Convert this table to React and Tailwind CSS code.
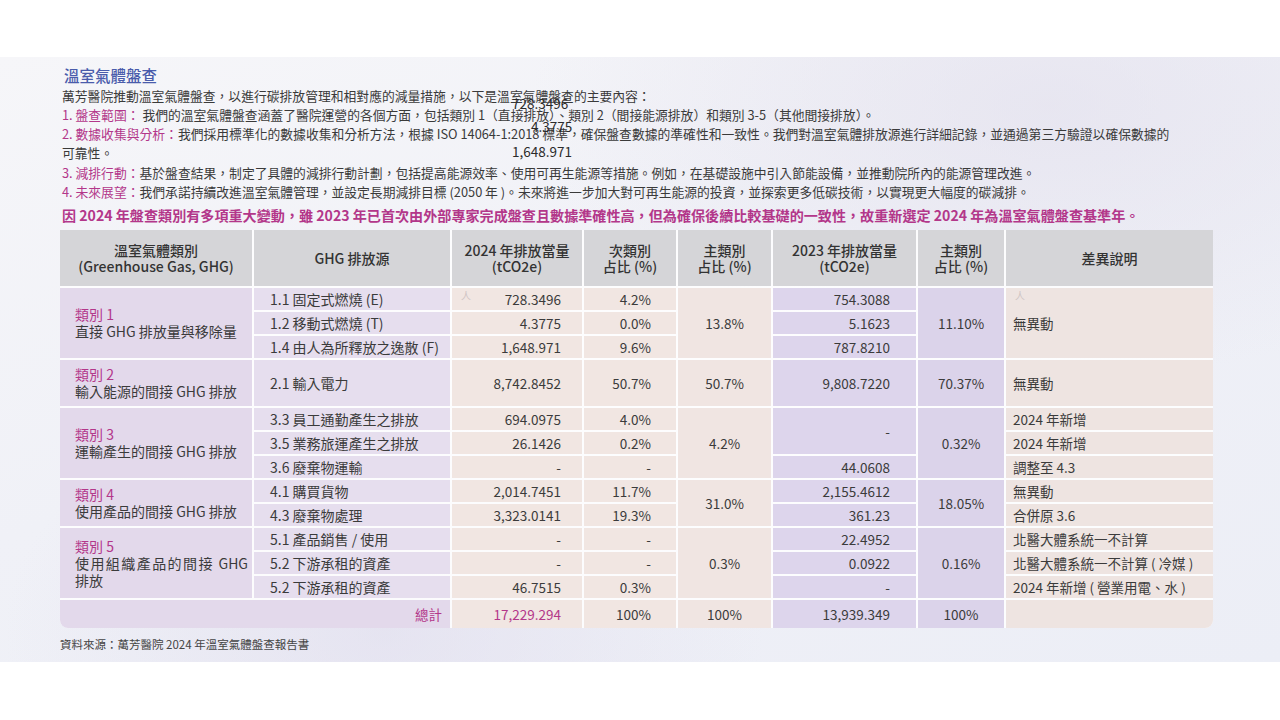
import React from "react";

const PINK = "text-[#b3378a]";

const H = ({ children }) => (
  <div className="bg-[#d5d5d8] flex flex-col items-center justify-center text-center text-[14px] leading-[16px] font-medium text-[#333]">
    {children}
  </div>
);

const cellBase = "flex items-center text-[13.5px] leading-[17px] text-[#3b3b3b] relative";

const L1 = ({ children, span = "" }) => (
  <div className={`${cellBase} !text-[14px] bg-[#e3d9eb] pl-[15px] pr-[4px] ${span}`}>
    <div className="w-full">{children}</div>
  </div>
);
const L2 = ({ children }) => (
  <div className={`${cellBase} !text-[14px] bg-[#e6deee] pl-[16px]`}>{children}</div>
);
const N3 = ({ children, pink = false, extra = null }) => (
  <div className={`${cellBase} bg-[#f1e6e2] justify-end pr-[21px] ${pink ? PINK : ""}`}>
    {extra}
    {children}
  </div>
);
const N4 = ({ children }) => (
  <div className={`${cellBase} bg-[#f1e6e2] justify-end pr-[25px]`}>{children}</div>
);
const C5 = ({ children, span = "" }) => (
  <div className={`${cellBase} bg-[#f0e5e2] justify-center ${span}`}>{children}</div>
);
const N6 = ({ children, span = "" }) => (
  <div className={`${cellBase} bg-[#ddd5ec] justify-end pr-[26px] ${span}`}>{children}</div>
);
const C7 = ({ children, span = "" }) => (
  <div className={`${cellBase} bg-[#dbd3ea] justify-center ${span}`}>{children}</div>
);
const T8 = ({ children, span = "", extra = null }) => (
  <div className={`${cellBase} bg-[#eee4e1] pl-[7px] ${span}`}>
    {extra}
    {children}
  </div>
);

const Cat = ({ n, children }) => (
  <>
    <div className={PINK}>類別 {n}</div>
    <div>{children}</div>
  </>
);

const Ghost = ({ pos }) => (
  <span className={`absolute ${pos} text-[10px] leading-[10px] text-[#cfc4c4]`}>人</span>
);

export default function App() {
  return (
    <div
      className="w-[1280px] h-[720px] bg-white flex flex-col"
      style={{ fontFamily: '"Noto Sans CJK TC", "Noto Sans", sans-serif' }}
    >
      <div className="h-[57px]" />
      <div className="relative h-[605px] bg-[linear-gradient(160deg,#f6f6f9_0%,#f0f1f7_45%,#eceef6_100%)] overflow-hidden">
        <div className="absolute inset-0 bg-[radial-gradient(ellipse_at_82%_8%,rgba(225,222,236,0.6),transparent_35%)]" />
        <div className="absolute inset-0 bg-[radial-gradient(ellipse_at_30%_95%,rgba(222,218,236,0.55),transparent_30%)]" />
        <div className="relative pl-[62px] pt-[7px] text-[12.8px] leading-[19px] text-[#3a3a3a]">
          <div className="text-[15.5px] leading-[22px] font-medium text-[#4a5cab] pl-[2px]">溫室氣體盤查</div>
          <div>萬芳醫院推動溫室氣體盤查，以進行碳排放管理和相對應的減量措施，以下是溫室氣體盤查的主要內容：</div>
          <div>
            <span className={PINK}>1. 盤查範圍：</span> 我們的溫室氣體盤查涵蓋了醫院運營的各個方面，包括類別 1（直接排放）、類別 2（間接能源排放）和類別 3-5（其他間接排放）。
          </div>
          <div>
            <span className={PINK}>2. 數據收集與分析：</span>我們採用標準化的數據收集和分析方法，根據 ISO 14064-1:2018 標準，確保盤查數據的準確性和一致性。我們對溫室氣體排放源進行詳細記錄，並通過第三方驗證以確保數據的
            <br />
            可靠性。
          </div>
          <div className="mt-[1px]">
            <span className={PINK}>3. 減排行動：</span>基於盤查結果，制定了具體的減排行動計劃，包括提高能源效率、使用可再生能源等措施。例如，在基礎設施中引入節能設備，並推動院所內的能源管理改進。
          </div>
          <div>
            <span className={PINK}>4. 未來展望：</span>我們承諾持續改進溫室氣體管理，並設定長期減排目標 (2050 年 )。未來將進一步加大對可再生能源的投資，並探索更多低碳技術，以實現更大幅度的碳減排。
          </div>
          <div className={`mt-[3px] text-[14.1px] leading-[22px] font-bold ${PINK}`}>
            因 2024 年盤查類別有多項重大變動，雖 2023 年已首次由外部專家完成盤查且數據準確性高，但為確保後續比較基礎的一致性，故重新選定 2024 年為溫室氣體盤查基準年。
          </div>

          <span className="absolute left-[512px] top-[37px] text-[13.5px] leading-[18px] text-[#2b2b2b]">728.3496</span>
          <span className="absolute left-[531px] top-[60px] text-[13.5px] leading-[18px] text-[#2b2b2b]">4.3775</span>
          <span className="absolute left-[512px] top-[85px] text-[13.5px] leading-[18px] text-[#2b2b2b]">1,648.971</span>
        </div>

        <div className="relative ml-[60px] mt-[4px] w-[1153px] grid grid-cols-[192px_196px_130px_92px_93px_143px_86px_207px] grid-rows-[56px_22px_22px_22px_46px_22px_22px_22px_22px_22px_22px_22px_22px_28px] gap-[2px] bg-white/85 rounded-b-[8px] overflow-hidden">
          <H>
            <div>溫室氣體類別</div>
            <div>(Greenhouse Gas, GHG)</div>
          </H>
          <H>GHG 排放源</H>
          <H>
            <div>2024 年排放當量</div>
            <div>(tCO2e)</div>
          </H>
          <H>
            <div>次類別</div>
            <div>占比 (%)</div>
          </H>
          <H>
            <div>主類別</div>
            <div>占比 (%)</div>
          </H>
          <H>
            <div>2023 年排放當量</div>
            <div>(tCO2e)</div>
          </H>
          <H>
            <div>主類別</div>
            <div>占比 (%)</div>
          </H>
          <H>差異說明</H>

          {/* 類別 1 */}
          <L1 span="row-span-3">
            <Cat n="1">直接 GHG 排放量與移除量</Cat>
          </L1>
          <L2>1.1 固定式燃燒 (E)</L2>
          <N3 extra={<Ghost pos="left-[9px] top-[3px]" />}>728.3496</N3>
          <N4>4.2%</N4>
          <C5 span="row-span-3">13.8%</C5>
          <N6>754.3088</N6>
          <C7 span="row-span-3">11.10%</C7>
          <T8 span="row-span-3" extra={<Ghost pos="left-[9px] top-[3px]" />}>無異動</T8>
          <L2>1.2 移動式燃燒 (T)</L2>
          <N3>4.3775</N3>
          <N4>0.0%</N4>
          <N6>5.1623</N6>
          <L2>1.4 由人為所釋放之逸散 (F)</L2>
          <N3>1,648.971</N3>
          <N4>9.6%</N4>
          <N6>787.8210</N6>

          {/* 類別 2 */}
          <L1>
            <Cat n="2">輸入能源的間接 GHG 排放</Cat>
          </L1>
          <L2>2.1 輸入電力</L2>
          <N3>8,742.8452</N3>
          <N4>50.7%</N4>
          <C5>50.7%</C5>
          <N6>9,808.7220</N6>
          <C7>70.37%</C7>
          <T8>無異動</T8>

          {/* 類別 3 */}
          <L1 span="row-span-3">
            <Cat n="3">運輸產生的間接 GHG 排放</Cat>
          </L1>
          <L2>3.3 員工通勤產生之排放</L2>
          <N3>694.0975</N3>
          <N4>4.0%</N4>
          <C5 span="row-span-3">4.2%</C5>
          <N6 span="row-span-2">-</N6>
          <C7 span="row-span-3">0.32%</C7>
          <T8>2024 年新增</T8>
          <L2>3.5 業務旅運產生之排放</L2>
          <N3>26.1426</N3>
          <N4>0.2%</N4>
          <T8>2024 年新增</T8>
          <L2>3.6 廢棄物運輸</L2>
          <N3>-</N3>
          <N4>-</N4>
          <N6>44.0608</N6>
          <T8>調整至 4.3</T8>

          {/* 類別 4 */}
          <L1 span="row-span-2">
            <Cat n="4">使用產品的間接 GHG 排放</Cat>
          </L1>
          <L2>4.1 購買貨物</L2>
          <N3>2,014.7451</N3>
          <N4>11.7%</N4>
          <C5 span="row-span-2">31.0%</C5>
          <N6>2,155.4612</N6>
          <C7 span="row-span-2">18.05%</C7>
          <T8>無異動</T8>
          <L2>4.3 廢棄物處理</L2>
          <N3>3,323.0141</N3>
          <N4>19.3%</N4>
          <N6>361.23</N6>
          <T8>合併原 3.6</T8>

          {/* 類別 5 */}
          <L1 span="row-span-3">
            <div className={PINK}>類別 5</div>
            <div className="text-justify">
              使用組織產品的間接 GHG
              <br className="hidden" /> 排放
            </div>
          </L1>
          <L2>5.1 產品銷售 / 使用</L2>
          <N3>-</N3>
          <N4>-</N4>
          <C5 span="row-span-3">0.3%</C5>
          <N6>22.4952</N6>
          <C7 span="row-span-3">0.16%</C7>
          <T8>北醫大體系統一不計算</T8>
          <L2>5.2 下游承租的資產</L2>
          <N3>-</N3>
          <N4>-</N4>
          <N6>0.0922</N6>
          <T8>北醫大體系統一不計算 ( 冷媒 )</T8>
          <L2>5.2 下游承租的資產</L2>
          <N3>46.7515</N3>
          <N4>0.3%</N4>
          <N6>-</N6>
          <T8>2024 年新增 ( 營業用電、水 )</T8>

          {/* 總計 */}
          <div className={`${cellBase} col-span-2 bg-[#e3d9eb] justify-end pr-[8px] ${PINK}`}>總計</div>
          <N3 pink>17,229.294</N3>
          <N4>100%</N4>
          <C5>100%</C5>
          <N6>13,939.349</N6>
          <C7>100%</C7>
          <T8 />
        </div>

        <div className="relative pl-[60px] mt-[8px] text-[11.5px] leading-[16px] text-[#444]">
          資料來源：萬芳醫院 2024 年溫室氣體盤查報告書
        </div>
      </div>
    </div>
  );
}
